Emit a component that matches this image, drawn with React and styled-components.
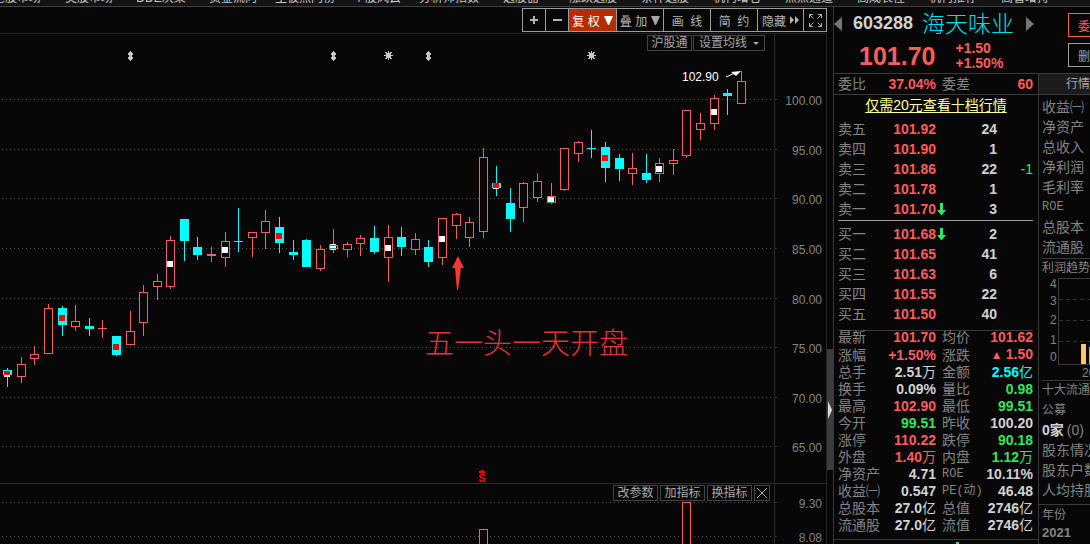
import styled, { createGlobalStyle } from "styled-components";

const colors = {
  bg: "#070707",
  up: "#ff5c5c",
  down: "#36e45c",
  cyan: "#00ffff",
  flat: "#d2d2d2",
  label: "#848484",
  line: "#3a3a3a",
};

const menu = [
  "港股市场",
  "美股市场",
  "DDE决策",
  "资金流向",
  "主板热门榜",
  "个股风云",
  "分析师指数",
  "选股器",
  "涨跌选股",
  "条件选股",
  "机构增仓",
  "点点通道",
  "高成长性",
  "机构推荐",
  "高管增持",
];

// [x, high, body top, body bottom, low, rising]
const candles = [
  [7, 368, 370, 375, 387, 0],
  [21, 357, 364, 377, 383, 1],
  [34, 346, 354, 359, 365, 1],
  [48, 304, 308, 354, 354, 1],
  [62, 306, 308, 325, 336, 0],
  [75, 305, 321, 327, 331, 1],
  [89, 318, 326, 329, 336, 0],
  [102, 320, 328, 329, 338, 1],
  [116, 336, 336, 355, 356, 0],
  [130, 311, 331, 345, 345, 1],
  [143, 285, 292, 323, 336, 1],
  [157, 274, 281, 287, 300, 1],
  [170, 236, 240, 287, 289, 1],
  [184, 219, 219, 241, 261, 0],
  [197, 237, 247, 255, 260, 0],
  [211, 247, 254, 256, 262, 1],
  [225, 232, 241, 258, 267, 1],
  [238, 208, 241, 242, 252, 0],
  [252, 232, 232, 238, 257, 1],
  [265, 210, 221, 233, 249, 1],
  [279, 217, 227, 243, 253, 0],
  [293, 240, 252, 255, 260, 0],
  [306, 239, 240, 267, 267, 0],
  [320, 245, 249, 269, 271, 1],
  [333, 229, 245, 249, 253, 1],
  [347, 242, 244, 250, 257, 1],
  [360, 235, 238, 244, 256, 1],
  [374, 226, 238, 252, 254, 0],
  [388, 225, 237, 258, 282, 1],
  [401, 227, 237, 247, 256, 0],
  [415, 233, 239, 250, 255, 1],
  [428, 240, 247, 262, 267, 0],
  [442, 218, 218, 258, 265, 1],
  [456, 213, 214, 226, 239, 1],
  [469, 217, 222, 238, 247, 1],
  [483, 148, 157, 232, 238, 1],
  [496, 166, 183, 188, 196, 0],
  [510, 188, 203, 219, 232, 0],
  [523, 182, 183, 208, 222, 1],
  [537, 173, 181, 198, 202, 1],
  [551, 183, 196, 203, 204, 1],
  [564, 148, 148, 190, 191, 1],
  [578, 141, 142, 154, 162, 1],
  [591, 130, 148, 149, 158, 0],
  [605, 142, 147, 168, 182, 0],
  [619, 154, 158, 169, 181, 0],
  [632, 153, 168, 174, 185, 1],
  [646, 154, 173, 180, 183, 0],
  [659, 158, 163, 174, 182, 1],
  [673, 149, 160, 164, 175, 1],
  [686, 110, 110, 156, 158, 1],
  [700, 113, 123, 130, 140, 1],
  [714, 95, 98, 124, 130, 1],
  [727, 89, 93, 96, 115, 0],
  [741, 71, 81, 104, 104, 1],
];

// [x, y, height, fill]
const marks = [
  [4, 375, 2, "#fafafa"],
  [4, 371, 4, "#ff0000"],
  [59, 315, 6, "#ff0000"],
  [113, 344, 6, "#ff0000"],
  [167, 261, 6, "#fafafa"],
  [222, 247, 6, "#fafafa"],
  [276, 233, 6, "#ff0000"],
  [330, 244, 6, "#fafafa"],
  [330, 245, 1, "#1f9aa0"],
  [330, 248, 1, "#1f9aa0"],
  [385, 245, 6, "#fafafa"],
  [439, 236, 6, "#fafafa"],
  [493, 188, 1, "#fafafa"],
  [493, 183, 5, "#ff0000"],
  [548, 197, 5, "#fafafa"],
  [548, 202, 1, "#1f9aa0"],
  [602, 155, 6, "#ff0000"],
  [656, 166, 6, "#fafafa"],
  [711, 109, 6, "#fafafa"],
];

const levels = [
  [99, "100.00"],
  [149, "95.00"],
  [198, "90.00"],
  [248, "85.00"],
  [298, "80.00"],
  [347, "75.00"],
  [397, "70.00"],
  [446, "65.00"],
  [502, "9.30"],
  [536, "8.08"],
];

const sells = [
  ["卖五", "101.92", "24"],
  ["卖四", "101.90", "1"],
  ["卖三", "101.86", "22", "-1"],
  ["卖二", "101.78", "1"],
  ["卖一", "101.70", "3", "", true],
];

const buys = [
  ["买一", "101.68", "2", "", true],
  ["买二", "101.65", "41"],
  ["买三", "101.63", "6"],
  ["买四", "101.55", "22"],
  ["买五", "101.50", "40"],
];

const details = [
  ["最新", "101.70", "up", "均价", "101.62", "up"],
  ["涨幅", "+1.50%", "up", "涨跌", "▲1.50", "up"],
  ["总手", "2.51万", "flat", "金额", "2.56亿", "cyan"],
  ["换手", "0.09%", "flat", "量比", "0.98", "down"],
  ["最高", "102.90", "up", "最低", "99.51", "down"],
  ["今开", "99.51", "down", "昨收", "100.20", "flat"],
  ["涨停", "110.22", "up", "跌停", "90.18", "down"],
  ["外盘", "1.40万", "up", "内盘", "1.12万", "down"],
  ["净资产", "4.71", "flat", "ROE", "10.11%", "flat"],
  ["收益㈠", "0.547", "flat", "PE(动)", "46.48", "flat"],
  ["总股本", "27.0亿", "flat", "总值", "2746亿", "flat"],
  ["流通股", "27.0亿", "flat", "流值", "2746亿", "flat"],
];

const finance = [
  "收益㈠",
  "净资产",
  "总收入",
  "净利润",
  "毛利率",
  "ROE",
  "总股本",
  "流通股",
];

const App = () => {
  return (
    <Page>
      <GlobalStyle />
      <Menu>
        {menu.map((item) => (
          <MenuItem href="#" key={item}>
            {item}
          </MenuItem>
        ))}
      </Menu>
      <Main>
        <ChartPane>
          <Toolbar />
          <ChartArea>
            <KLineChart />
            <TopTags>
              <Tag>沪股通</Tag>
              <Tag $wide>
                设置均线
                <svg width="6" height="3">
                  <path d="M0 0H6L3 3Z" fill="#a8a8a8" />
                </svg>
              </Tag>
            </TopTags>
            <IndicatorTags>
              <Tag>改参数</Tag>
              <Tag>加指标</Tag>
              <Tag>换指标</Tag>
              <CloseTag aria-label="关闭">
                <svg width="10" height="10">
                  <path d="M0 0L10 10M10 0L0 10" stroke="#a8a8a8" />
                </svg>
              </CloseTag>
            </IndicatorTags>
          </ChartArea>
        </ChartPane>
        <Splitter>
          <Thumb>
            <svg width="5" height="18">
              <path d="M1 0L5 9L1 18Z" fill="#dcdcdc" />
            </svg>
          </Thumb>
        </Splitter>
        <Side>
          <StockHeader />
          <SideBody>
            <Quote />
            <Info />
          </SideBody>
        </Side>
      </Main>
    </Page>
  );
};

export default App;

const Toolbar = () => (
  <ToolbarRow>
    <ToolButton $w={24} aria-label="放大">
      <svg width="9" height="9">
        <path d="M0 3.5H8M0 4.5H8M3.5 0V8M4.5 0V8" stroke="#b4b4b4" />
      </svg>
    </ToolButton>
    <ToolButton $w={23} aria-label="缩小">
      <svg width="9" height="9">
        <path d="M0 3.5H9M0 4.5H9" stroke="#b4b4b4" />
      </svg>
    </ToolButton>
    <ToolButton $w={48} $active>
      复 权
      <svg width="9" height="9">
        <path d="M0 0H9L5 9H4Z" fill="#fff" />
      </svg>
    </ToolButton>
    <ToolButton $w={47}>
      叠 加
      <svg width="9" height="9">
        <path d="M0 0H9L5 9H4Z" fill="#a8a8a8" />
      </svg>
    </ToolButton>
    <ToolButton $w={47}>画&nbsp;&nbsp;线</ToolButton>
    <ToolButton $w={47}>简&nbsp;&nbsp;约</ToolButton>
    <ToolButton $w={46}>
      隐藏
      <svg width="9" height="8">
        <path d="M0 0L4 4L0 8ZM5 0L9 4L5 8Z" fill="#b4b4b4" />
      </svg>
    </ToolButton>
    <ToolButton $w={23} aria-label="全屏">
      <svg width="13" height="13" fill="none" stroke="#b4b4b4">
        <path d="M.5 4V.5H4M.5.5L4.5 4.5M9 .5H12.5V4M12.5.5L8.5 4.5M.5 9V12.5H4M.5 12.5L4.5 8.5M9 12.5H12.5V9M12.5 12.5L8.5 8.5" />
      </svg>
    </ToolButton>
  </ToolbarRow>
);

const KLineChart = () => (
  <ChartSvg viewBox="0 34 827 510" preserveAspectRatio="xMaxYMin meet">
    <g shapeRendering="crispEdges">
      {levels.map(([y]) => (
        <line
          key={y}
          x1="2"
          x2="774"
          y1={y + 0.5}
          y2={y + 0.5}
          stroke="#555"
          strokeDasharray="1 3"
        />
      ))}
      <rect x="774" y="34" width="1" height="510" fill="#2c2c2c" />
      <rect x="826" y="34" width="1" height="510" fill="#262626" />
      <rect x="0" y="483" width="827" height="1" fill="#2c2c2c" />
      {levels.map(([y]) => (
        <rect key={y} x="775" y={y} width="2" height="1" fill="#333" />
      ))}
      {candles.map(([x, high, top, bottom, low, rising]) => (
        <g key={x} fill={rising ? colors.up : colors.cyan}>
          <rect x={x} y={high} width="1" height={low - high} />
          <rect x={x - 4} y={top} width="9" height={bottom - top} />
          {rising && bottom - top > 2 ? (
            <rect
              x={x - 3}
              y={top + 1}
              width="7"
              height={bottom - top - 2}
              fill={colors.bg}
            />
          ) : null}
        </g>
      ))}
      {marks.map(([x, y, h, fill]) => (
        <rect key={`${x}-${y}`} x={x} y={y} width="6" height={h} fill={fill} />
      ))}
      <g fill={colors.bg} stroke={colors.up}>
        <rect x="479.5" y="529.5" width="8" height="20" />
        <rect x="682.5" y="502.5" width="8" height="50" />
      </g>
      <g fill="#c8c8c8">
        {[130, 333, 428].map((x) => (
          <path
            key={x}
            d={`M${x} 51h1v1h1v1h1v2h-1v2h1v2h-1v1h-1v1h-1v-1h-1v-1h-1v-2h1v-2h-1v-2h1v-1h1z`}
          />
        ))}
        {[388, 591].map((x) => (
          <path
            key={x}
            d={`M${x} 51h1v2h1v-1h2v1h-1v2h2v1h-2v2h1v1h-2v-1h-1v2h-1v-2h-1v1h-2v-1h1v-2h-2v-1h2v-2h-1v-1h2v1h1z`}
          />
        ))}
      </g>
      <path d="M481 470h2v1h2v2h-6v-2h2z" fill="#ff0000" />
    </g>
    {levels.map(([y, text]) => (
      <AxisLabel key={text} x="822" y={y + 6}>
        {text}
      </AxisLabel>
    ))}
    <Signal x="482" y="482">
      S
    </Signal>
    <PeakLabel x="682" y="81">
      102.90
    </PeakLabel>
    <path d="M726 77L735 73" stroke="#fff" />
    <path d="M741 71L731 72L736 76Z" fill="#fff" />
    <path d="M458 256L464 268H461L458 290H457L455 268H452Z" fill="#ff3434" />
    <Remark x="425" y="354">
      五一头一天开盘
    </Remark>
  </ChartSvg>
);

const StockHeader = () => (
  <Header>
    <HeaderMain>
      <NameRow>
        <ArrowButton aria-label="上一只">
          <svg width="8" height="14">
            <path d="M8 0V14L0 7Z" fill="#777" />
          </svg>
        </ArrowButton>
        <Code>603288</Code>
        <Name>海天味业</Name>
        <ArrowButton aria-label="下一只">
          <svg width="8" height="14">
            <path d="M0 0V14L8 7Z" fill="#777" />
          </svg>
        </ArrowButton>
      </NameRow>
      <PriceRow>
        <Price>101.70</Price>
        <Change>
          <span>+1.50</span>
          <span>+1.50%</span>
        </Change>
      </PriceRow>
    </HeaderMain>
    <HeaderActions>
      <ActionButton $color={colors.up}>委托</ActionButton>
      <ActionButton $color="#a0a0a0">删除</ActionButton>
    </HeaderActions>
  </Header>
);

const DownArrow = () => (
  <svg width="9" height="12">
    <path d="M3 0H6V7H9L5 12H4L0 7H3Z" fill={colors.down} />
  </svg>
);

const OrderTable = ({ rows }) => (
  <Table>
    <colgroup>
      <col width="44" />
      <col width="54" />
      <col width="10" />
      <col width="51" />
      <col width="36" />
    </colgroup>
    <tbody>
      {rows.map(([label, price, amount, diff, falling]) => (
        <OrderRow key={label}>
          <LabelCell>{label}</LabelCell>
          <ValueCell $color={colors.up}>{price}</ValueCell>
          <ArrowCell>{falling && <DownArrow />}</ArrowCell>
          <ValueCell $color={colors.flat}>{amount}</ValueCell>
          <ValueCell $color={colors.down} $light>
            {diff}
          </ValueCell>
        </OrderRow>
      ))}
    </tbody>
  </Table>
);

const Value = ({ text }) => {
  const unit = /[万亿]$/.test(text) ? text.slice(-1) : "";
  const rising = text.startsWith("▲");
  const number = text.replace(/[▲万亿]/g, "");
  return (
    <>
      {rising && <Triangle>▲</Triangle>}
      {number}
      {unit && <Unit>{unit}</Unit>}
    </>
  );
};

const Quote = () => (
  <QuotePanel>
    <RatioRow>
      <Label>委比</Label>
      <RatioValue>37.04%</RatioValue>
      <Label $indent>委差</Label>
      <RatioValue>60</RatioValue>
    </RatioRow>
    <Promo>
      <a href="#">仅需20元查看十档行情</a>
    </Promo>
    <OrderTable rows={sells} />
    <Divider $color="#9c9c9c" />
    <OrderTable rows={buys} />
    <Divider />
    <Table>
      <colgroup>
        <col width="44" />
        <col width="54" />
        <col width="46" />
        <col width="51" />
      </colgroup>
      <tbody>
        {details.map(([l1, v1, c1, l2, v2, c2]) => (
          <DetailRow key={l1}>
            <LabelCell>{l1}</LabelCell>
            <ValueCell $color={colors[c1]}>
              <Value text={v1} />
            </ValueCell>
            <LabelCell $indent $latin={/[A-Z]/.test(l2)}>
              {l2}
            </LabelCell>
            <ValueCell $color={colors[c2]}>
              <Value text={v2} />
            </ValueCell>
          </DetailRow>
        ))}
      </tbody>
    </Table>
    <QuoteFoot>
      <svg width="3" height="2">
        <rect width="3" height="2" fill={colors.down} />
      </svg>
    </QuoteFoot>
  </QuotePanel>
);

const Info = () => (
  <InfoPanel>
    <InfoTab>行情</InfoTab>
    <InfoList>
      {finance.map((item) => (
        <InfoItem key={item} $latin={item === "ROE"}>
          {item}
        </InfoItem>
      ))}
    </InfoList>
    <InfoTitle>利润趋势</InfoTitle>
    <TrendSvg width="120" height="103">
      <g shapeRendering="crispEdges">
        <path d="M80 1.5H16.5V87.5H80" fill="none" stroke="#3a3a3a" />
        <path
          d="M17 22.5H80M17 43.5H80M17 64.5H80"
          stroke="#333"
          strokeDasharray="4 3"
        />
        <rect x="39" y="67" width="5" height="20" fill="#ffc564" />
        <rect x="47" y="70" width="5" height="17" fill="#f0a020" />
      </g>
      <text x="8" y="11">4</text>
      <text x="8" y="28">3</text>
      <text x="8" y="47">2</text>
      <text x="8" y="67">1</text>
      <text x="8" y="84">0</text>
      <text x="40" y="100">2020</text>
    </TrendSvg>
    <InfoTitle>十大流通</InfoTitle>
    <InfoItem $small>公募</InfoItem>
    <InfoItem>
      <Fund>0家</Fund>
      (0)
    </InfoItem>
    <InfoItem>股东情况</InfoItem>
    <InfoItem>股东户数</InfoItem>
    <InfoItem>人均持股</InfoItem>
    <YearBlock>
      <InfoItem $small>年份</InfoItem>
      <Year>2021</Year>
    </YearBlock>
  </InfoPanel>
);

const GlobalStyle = createGlobalStyle`
  * {
    box-sizing: border-box;
  }

  body {
    margin: 0;
    background: ${colors.bg};
    color: ${colors.label};
    font-family: "Liberation Sans", "Noto Sans CJK SC", sans-serif;
    font-size: 12px;
    overflow: hidden;
  }

  button {
    font: inherit;
    padding: 0;
    cursor: pointer;
  }

  svg {
    display: block;
    flex: none;
  }
`;

const Page = styled.div`
  display: flex;
  flex-direction: column;
  height: 100vh;
`;

const Menu = styled.nav`
  display: flex;
  align-items: flex-end;
  flex: none;
  height: 7px;
  margin-left: -19px;
  overflow: hidden;
  background: #141414;
  border-bottom: 1px solid #404040;
`;

const MenuItem = styled.a`
  flex: none;
  width: 72px;
  text-align: center;
  white-space: nowrap;
  line-height: 16px;
  color: #c8c8c8;
  text-decoration: none;
`;

const Main = styled.div`
  display: flex;
  flex: 1;
  min-height: 0;
`;

const ChartPane = styled.section`
  display: flex;
  flex-direction: column;
  flex: 1;
  min-width: 0;
`;

const ToolbarRow = styled.div`
  display: flex;
  justify-content: flex-end;
  flex: none;
  height: 27px;
  padding: 1px 0;
  border-bottom: 1px solid #242424;
`;

const ToolButton = styled.button`
  display: flex;
  align-items: center;
  justify-content: center;
  gap: 4px;
  width: ${({ $w }) => $w}px;
  height: 24px;
  white-space: nowrap;
  color: ${({ $active }) => ($active ? "#fff" : "#b4b4b4")};
  background: ${({ $active }) => ($active ? "#b42d00" : "transparent")};
  border: 1px solid #9c9c9c;
  border-left-width: 0;

  &:first-child {
    border-left-width: 1px;
  }
`;

const ChartArea = styled.div`
  position: relative;
  flex: 1;
  min-height: 0;
`;

const ChartSvg = styled.svg`
  width: 100%;
  height: 100%;
`;

const AxisLabel = styled.text`
  font-size: 12px;
  text-anchor: end;
  fill: #848484;
`;

const Signal = styled.text`
  font-size: 11px;
  font-weight: 700;
  text-anchor: middle;
  fill: #ff0000;
`;

const PeakLabel = styled.text`
  font-size: 12px;
  fill: #fff;
`;

const Remark = styled.text`
  font-size: 29px;
  font-weight: 300;
  fill: #e23434;
`;

const TopTags = styled.div`
  position: absolute;
  top: 1px;
  right: 62px;
  display: flex;
  gap: 1px;
`;

const IndicatorTags = styled.div`
  position: absolute;
  bottom: 43px;
  right: 57px;
  display: flex;
  gap: 2px;
`;

const Tag = styled.button`
  display: flex;
  align-items: center;
  justify-content: center;
  gap: 6px;
  width: ${({ $wide }) => ($wide ? 72 : 45)}px;
  height: 16px;
  line-height: 14px;
  white-space: nowrap;
  color: #a8a8a8;
  background: ${colors.bg};
  border: 1px solid #444;
`;

const CloseTag = styled(Tag)`
  width: 16px;
`;

const Splitter = styled.div`
  flex: none;
  width: 7px;
  padding-top: 342px;
  border-right: 1px solid ${colors.line};
`;

const Thumb = styled.div`
  display: flex;
  align-items: center;
  height: 121px;
  background: #3c3c3c;
`;

const Side = styled.aside`
  display: flex;
  flex-direction: column;
  flex: none;
  width: 256px;
`;

const Header = styled.header`
  display: flex;
  flex: none;
  height: 67px;
  border-bottom: 1px solid ${colors.line};
`;

const HeaderMain = styled.div`
  width: 204px;
`;

const NameRow = styled.div`
  display: flex;
  align-items: center;
  height: 33px;
`;

const ArrowButton = styled.button`
  background: none;
  border: none;
`;

const Code = styled.span`
  margin-left: 11px;
  font-size: 18px;
  font-weight: 700;
  color: ${colors.flat};
`;

const Name = styled.h1`
  margin: 0 12px 0 9px;
  font-size: 23px;
  font-weight: 300;
  line-height: 32px;
  color: #00e0e8;
`;

const PriceRow = styled.div`
  display: flex;
  align-items: center;
  gap: 20px;
  height: 32px;
  padding-left: 25px;
  color: ${colors.up};
`;

const Price = styled.strong`
  font-size: 25px;
`;

const Change = styled.div`
  display: flex;
  flex-direction: column;
  font-size: 14px;
  font-weight: 700;
  line-height: 15px;
`;

const HeaderActions = styled.div`
  display: flex;
  flex-direction: column;
  flex: 1;
  gap: 6px;
  padding: 6px 0 0 30px;
  overflow: hidden;
`;

const ActionButton = styled.button`
  flex: none;
  width: 44px;
  height: 24px;
  color: ${({ $color }) => $color};
  background: transparent;
  border: 1px solid ${({ $color }) => $color};
`;

const SideBody = styled.div`
  display: flex;
  flex: 1;
  min-height: 0;
`;

const QuotePanel = styled.section`
  flex: none;
  width: 205px;
  border-right: 1px solid ${colors.line};
`;

const RatioRow = styled.div`
  display: grid;
  grid-template-columns: 44px 54px 46px 1fr;
  align-items: center;
  height: 21px;
  padding: 0 5px 0 4px;
  border-bottom: 1px solid ${colors.line};
`;

const Label = styled.span`
  padding-left: ${({ $indent }) => ($indent ? 6 : 0)}px;
  font-size: 14px;
  line-height: 20px;
`;

const RatioValue = styled.strong`
  text-align: right;
  font-size: 14px;
  color: ${colors.up};
`;

const Promo = styled.div`
  height: 24px;
  text-align: center;
  font-size: 14px;
  line-height: 20px;

  a {
    color: #ffff9c;
    text-underline-offset: 2px;
  }
`;

const Table = styled.table`
  table-layout: fixed;
  width: 195px;
  margin-left: 4px;
  border-collapse: collapse;
  font-size: 14px;

  td,
  th {
    padding: 0;
    line-height: 17px;
    white-space: nowrap;
  }
`;

const OrderRow = styled.tr`
  height: 20px;
`;

const DetailRow = styled.tr`
  height: 17px;
`;

const LabelCell = styled.th.attrs({ scope: "row" })`
  text-align: left;
  font-weight: 400;

  && {
    padding-left: ${({ $indent }) => ($indent ? 6 : 0)}px;
  }

  ${({ $latin }) =>
    $latin && 'font-family: "Liberation Mono", "Noto Sans CJK SC", monospace; font-size: 12px;'}
`;

const ValueCell = styled.td`
  text-align: right;
  font-weight: ${({ $light }) => ($light ? 400 : 700)};
  color: ${({ $color }) => $color};
`;

const ArrowCell = styled.td`
  svg {
    margin-left: 1px;
  }
`;

const Triangle = styled.span`
  margin-right: 3px;
  font-size: 12px;
`;

const Unit = styled.span`
  font-weight: 400;
`;

const Divider = styled.hr`
  height: 1px;
  margin: 1px 5px 3px 4px;
  border: none;
  background: ${({ $color }) => $color || colors.line};

  &:last-of-type {
    margin: 6px 5px -2px 4px;
  }
`;

const QuoteFoot = styled.div`
  display: flex;
  justify-content: center;
  margin-top: 5px;
  padding: 2px 0 0 43px;
  border-top: 1px solid ${colors.line};
`;

const InfoPanel = styled.section`
  flex: 1;
  min-width: 0;
  overflow: hidden;
  white-space: nowrap;
`;

const InfoTab = styled.div`
  height: 21px;
  margin-bottom: 2px;
  padding-left: 27px;
  line-height: 20px;
  color: #a8a8a8;
  background: #1b1b1b;
  border-bottom: 1px solid ${colors.line};
`;

const InfoList = styled.div`
  margin-bottom: 1px;
`;

const InfoItem = styled.div`
  padding-left: 3px;
  line-height: 20px;
  height: 20px;
  font-size: ${({ $small, $latin }) => ($small || $latin ? 12 : 14)}px;
  ${({ $latin }) => $latin && 'font-family: "Liberation Mono", monospace;'}
`;

const InfoTitle = styled.h2`
  height: 20px;
  margin: 0 0 0 3px;
  font-size: 12px;
  font-weight: 400;
  line-height: 18px;
  border-top: 1px solid ${colors.line};
`;

const TrendSvg = styled.svg`
  margin: -1px 0 0 3px;
  font-size: 12px;
  fill: ${colors.label};
`;

const Fund = styled.strong`
  margin-right: 3px;
  font-weight: 700;
  color: ${colors.flat};
`;

const YearBlock = styled.div`
  margin-top: 4px;
  border-top: 1px solid ${colors.line};
`;

const Year = styled.strong`
  display: block;
  padding-left: 3px;
  font-size: 13px;
`;
